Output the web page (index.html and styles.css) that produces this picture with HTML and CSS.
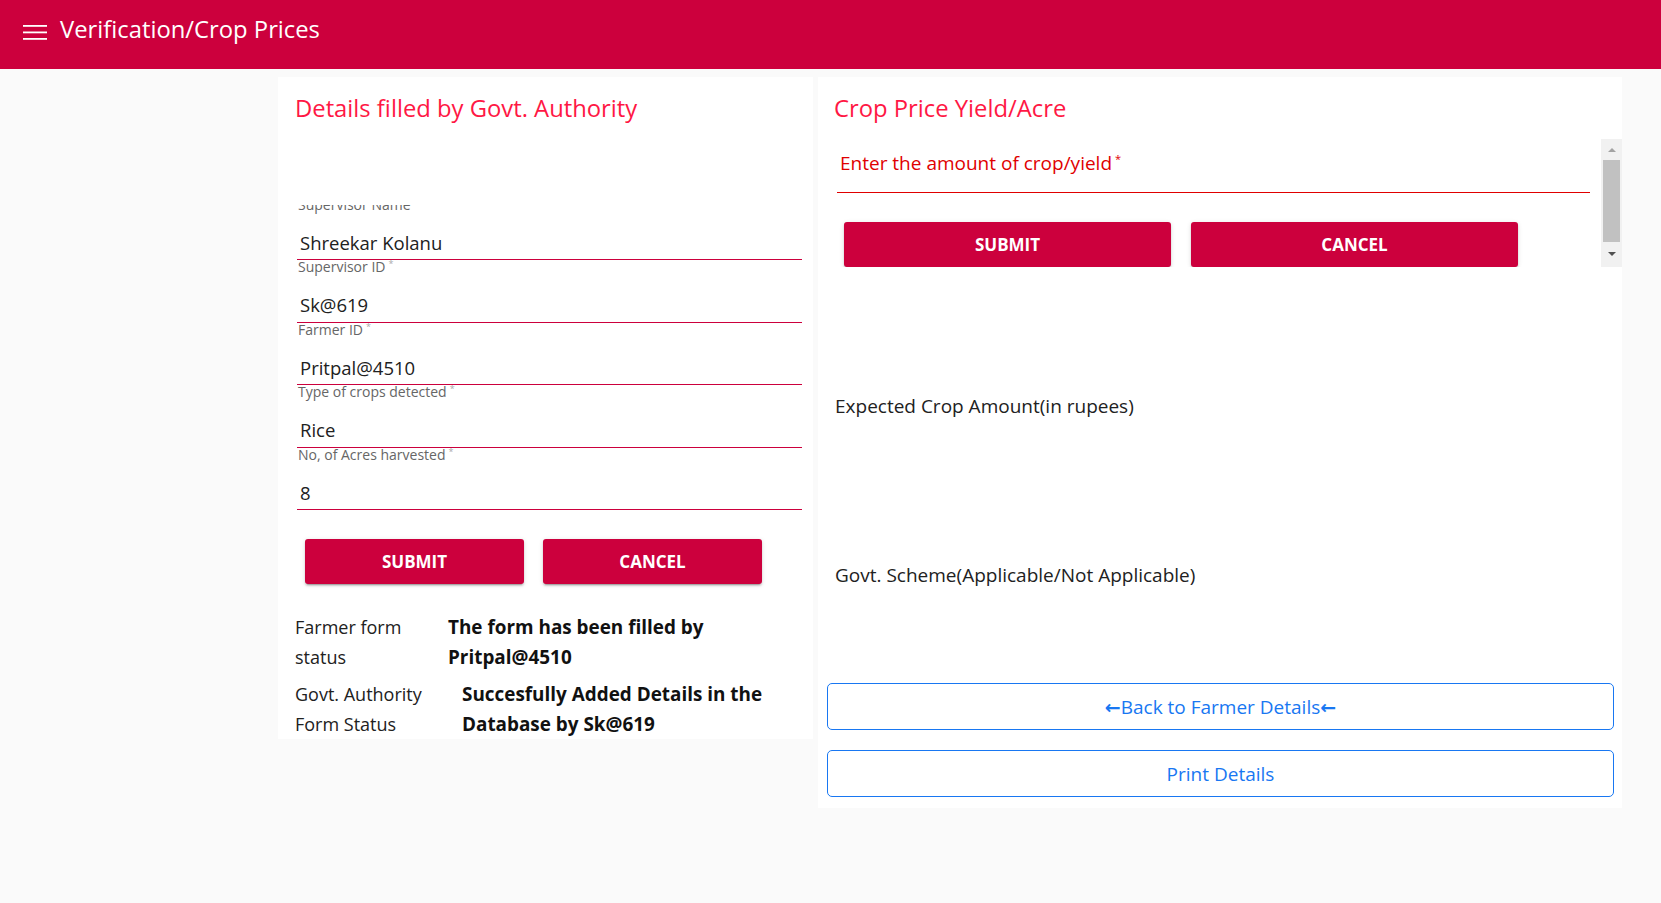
FILE: index.html
```html
<!DOCTYPE html>
<html lang="en">
<head>
<meta charset="utf-8">
<title>Verification/Crop Prices</title>
<link rel="stylesheet" href="styles.css">
</head>
<body>
<header class="appbar">
  <svg class="menu-icon" width="24" height="16" viewBox="0 0 24 16" aria-hidden="true">
    <rect x="0" y="1" width="24" height="1.8"></rect>
    <rect x="0" y="7.5" width="24" height="1.8"></rect>
    <rect x="0" y="14" width="24" height="1.8"></rect>
  </svg>
  <h1 class="appbar-title">Verification/Crop Prices</h1>
</header>
<main class="layout">
  <section class="card card-left">
    <h2 class="card-title">Details filled by Govt. Authority</h2>
    <div class="form-scroll">
      <div class="form-inner">
        <div class="field">
          <label class="field-label">Supervisor Name<span class="req">*</span></label>
          <div class="field-input">Shreekar Kolanu</div>
        </div>
        <div class="field">
          <label class="field-label">Supervisor ID<span class="req">*</span></label>
          <div class="field-input">Sk@619</div>
        </div>
        <div class="field">
          <label class="field-label">Farmer ID<span class="req">*</span></label>
          <div class="field-input">Pritpal@4510</div>
        </div>
        <div class="field">
          <label class="field-label">Type of crops detected<span class="req">*</span></label>
          <div class="field-input">Rice</div>
        </div>
        <div class="field">
          <label class="field-label">No, of Acres harvested<span class="req">*</span></label>
          <div class="field-input">8</div>
        </div>
      </div>
    </div>
    <div class="btn-row">
      <button class="btn-primary">SUBMIT</button>
      <button class="btn-primary">CANCEL</button>
    </div>
    <div class="status status-1">
      <div class="status-label">Farmer form status</div>
      <div class="status-value">The form has been filled by Pritpal@4510</div>
    </div>
    <div class="status status-2">
      <div class="status-label">Govt. Authority Form Status</div>
      <div class="status-value">Succesfully Added Details in the Database by Sk@619</div>
    </div>
  </section>

  <section class="card card-right">
    <h2 class="card-title">Crop Price Yield/Acre</h2>
    <div class="yield-box">
      <div class="yield-content">
        <div class="yield-field">Enter the amount of crop/yield<span class="req req-red">*</span></div>
        <div class="btn-row yield-buttons">
          <button class="btn-primary">SUBMIT</button>
          <button class="btn-primary">CANCEL</button>
        </div>
      </div>
      <div class="fake-scrollbar">
        <div class="sb-btn sb-up"></div>
        <div class="sb-thumb"></div>
        <div class="sb-btn sb-down"></div>
      </div>
    </div>
    <p class="info info-expected">Expected Crop Amount(in rupees)</p>
    <p class="info info-scheme">Govt. Scheme(Applicable/Not Applicable)</p>
    <button class="outline-btn btn-back"><span class="arrow">&larr;</span>Back to Farmer Details<span class="arrow">&larr;</span></button>
    <button class="outline-btn btn-print">Print Details</button>
  </section>
</main>
</body>
</html>
```

FILE: styles.css
```css
* {
  box-sizing: border-box;
}

html,
body {
  margin: 0;
  padding: 0;
}

body {
  width: 1661px;
  height: 903px;
  overflow: hidden;
  background: #fafafa;
  font-family: "Open Sans", "Noto Sans", "DejaVu Sans", sans-serif;
  color: #212121;
}

/* App bar */
.appbar {
  height: 69px;
  background: #cc003d;
  display: flex;
  align-items: flex-start;
  padding-left: 23px;
  color: #fff;
}

.menu-icon {
  flex: none;
  margin-top: 24px;
  fill: #fff;
}

.appbar-title {
  margin: 14px 0 0 13px;
  font-size: 23.8px;
  line-height: 30px;
  font-weight: 400;
  white-space: nowrap;
}

/* Layout */
.layout {
  display: flex;
  align-items: flex-start;
  gap: 5px;
  padding: 8px 0 0 278px;
}

.card {
  background: #fff;
}

.card-title {
  margin: 15px 0 0;
  font-size: 23.8px;
  line-height: 32px;
  font-weight: 500;
  color: #ff1744;
  white-space: nowrap;
}

/* Left card */
.card-left {
  width: 535px;
  padding: 0 11px 0 17px;
}

.form-scroll {
  margin: 81px 0 0 2px;
  height: 310px;
  overflow: hidden;
}

.form-inner {
  margin-top: -7px;
}

.field-label {
  display: block;
  height: 12px;
  padding-left: 1px;
  font-size: 14px;
  line-height: 7px;
  color: #666;
  white-space: nowrap;
}

.req {
  margin-left: 3px;
  font-size: 9px;
  vertical-align: 5px;
  color: #aaa;
}

.req-red {
  font-size: 11px;
  vertical-align: 7px;
  color: #e00000;
}

.field-input {
  padding: 20.6px 0 4.9px 3px;
  font-size: 18.5px;
  line-height: 24px;
  border-bottom: 1px solid #cc003d;
  color: #212121;
  white-space: nowrap;
}

.btn-row {
  display: flex;
  gap: 19px;
  margin: 24px 0 0 10px;
}

.btn-primary {
  width: 219px;
  height: 45px;
  padding: 0;
  border: 0;
  border-radius: 3px;
  background: #cc003d;
  color: #fff;
  font-family: inherit;
  font-size: 17px;
  font-weight: 700;
  display: flex;
  align-items: center;
  justify-content: center;
  box-shadow: 0 3px 1px -2px rgba(0, 0, 0, 0.2), 0 2px 2px 0 rgba(0, 0, 0, 0.14), 0 1px 5px 0 rgba(0, 0, 0, 0.12);
}

.status {
  display: grid;
  grid-template-columns: 153px 1fr;
  font-size: 18px;
  line-height: 30px;
  color: #212121;
}

.status-1 {
  margin-top: 28px;
}

.status-2 {
  grid-template-columns: 167px 1fr;
  margin-top: 7px;
}

.status-value {
  font-size: 18.9px;
  font-weight: 700;
  color: #111;
}

/* Right card */
.card-right {
  width: 804px;
  padding-bottom: 11px;
}

.card-right .card-title {
  padding-left: 16px;
}

.yield-box {
  display: flex;
  height: 128px;
  margin: 15px 0 0 8px;
}

.yield-content {
  flex: 1;
  overflow: hidden;
  padding: 0 11px;
}

.yield-field {
  height: 54px;
  padding: 7px 0 0 3px;
  font-size: 19px;
  line-height: 26px;
  color: #e00000;
  border-bottom: 1px solid #e00000;
  white-space: nowrap;
}

.yield-buttons {
  gap: 20px;
  margin: 29px 0 0 7px;
}

.yield-buttons .btn-primary {
  width: 327px;
}

.fake-scrollbar {
  flex: none;
  width: 21px;
  background: #f1f1f1;
  display: flex;
  flex-direction: column;
  align-items: center;
}

.sb-btn {
  width: 100%;
  display: flex;
  align-items: center;
  justify-content: center;
}

.sb-up {
  height: 21px;
}

.sb-up::before {
  content: "";
  border-left: 4.5px solid transparent;
  border-right: 4.5px solid transparent;
  border-bottom: 4.5px solid #a3a3a3;
}

.sb-down {
  height: 20px;
  margin-top: auto;
  padding-bottom: 6px;
}

.sb-down::before {
  content: "";
  border-left: 4.5px solid transparent;
  border-right: 4.5px solid transparent;
  border-top: 4.5px solid #505050;
}

.sb-thumb {
  width: 17px;
  height: 82px;
  background: #c1c1c1;
}

.info {
  margin: 0;
  padding-left: 17px;
  font-size: 19px;
  line-height: 26px;
  color: #212121;
  white-space: nowrap;
}

.info-expected {
  margin-top: 126px;
}

.info-scheme {
  margin-top: 143px;
}

.outline-btn {
  display: flex;
  align-items: center;
  justify-content: center;
  width: 787px;
  height: 47px;
  margin: 0 8px 0 9px;
  padding: 0;
  border: 1px solid #1877f2;
  border-radius: 5px;
  background: #fff;
  color: #1877f2;
  font-family: inherit;
  font-size: 19px;
}

.arrow {
  font-weight: 700;
}

.btn-back {
  margin-top: 95px;
}

.btn-print {
  margin-top: 20px;
}
```
